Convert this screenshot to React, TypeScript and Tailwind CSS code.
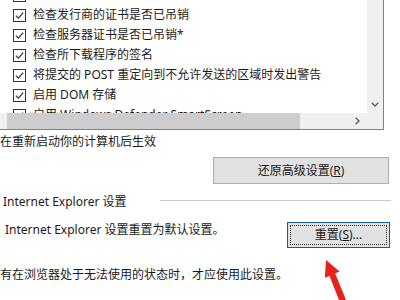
import React from "react";

const rows = [
  "检查证书地址不匹配*",
  "检查发行商的证书是否已吊销",
  "检查服务器证书是否已吊销*",
  "检查所下载程序的签名",
  "将提交的 POST 重定向到不允许发送的区域时发出警告",
  "启用 DOM 存储",
  "启用 Windows Defender SmartScreen",
];

const CheckBox = () => (
  <svg width="13" height="13" viewBox="0 0 13 13" className="shrink-0">
    <rect x="0.5" y="0.5" width="12" height="12" fill="#fff" stroke="#333" />
    <path d="M2.8 6.6 L5.3 9.1 L10.2 3.6" fill="none" stroke="#333" strokeWidth="1.2" />
  </svg>
);

const Arrow = () => (
  <svg width="400" height="300" className="pointer-events-none absolute left-0 top-0">
    <polygon points="326,260 339.6,271.6 335.2,273.5 346,300 339,300 329.5,275.9 324.8,277.8" fill="#e5231b" />
  </svg>
);

export default function App() {
  return (
    <div
      className="relative h-[300px] w-[400px] overflow-hidden bg-white text-[12px] leading-[16px] text-[#1a1a1a]"
      style={{ fontFamily: '"Noto Sans", "Noto Sans CJK SC", sans-serif' }}
    >
      {/* advanced settings list box */}
      <div className="flex h-[130px] w-[384px] flex-col border-b border-r border-[#828282]">
        <div className="flex h-[113px]">
          <div className="flex-1 overflow-hidden">
            <div className="-mt-[15px] flex flex-col">
              {rows.map((r) => (
                <div key={r} className="flex h-[20px] items-center gap-[7px] pl-[13px] whitespace-nowrap">
                  <CheckBox />
                  <span>{r}</span>
                </div>
              ))}
            </div>
          </div>
          <div className="flex w-[16px] flex-col items-center justify-end bg-[#f0f0f0] pb-[6px]">
            <svg width="8" height="5" viewBox="0 0 8 5">
              <path d="M0.7 0.7 L4 4 L7.3 0.7" fill="none" stroke="#606060" strokeWidth="1.4" />
            </svg>
          </div>
        </div>
        <div className="flex h-[16px]">
          <div className="w-[7px] bg-[#f0f0f0]" />
          <div className="w-[293px] bg-[#cdcdcd]" />
          <div className="flex flex-1 items-center justify-end bg-[#f0f0f0] pr-[23px]">
            <svg width="5" height="8" viewBox="0 0 5 8">
              <path d="M0.7 0.7 L4 4 L0.7 7.3" fill="none" stroke="#606060" strokeWidth="1.4" />
            </svg>
          </div>
        </div>
      </div>

      <div className="mt-[4px] whitespace-nowrap">在重新启动你的计算机后生效</div>

      <div className="mt-[7px] flex">
        <button className="ml-[213px] flex h-[27px] w-[176px] items-center justify-center border border-[#adadad] bg-[#e1e1e1]">
          还原高级设置(<span className="underline">R</span>)
        </button>
      </div>

      <div className="mt-[10px] flex h-[16px] items-start">
        <span className="ml-[3px] whitespace-nowrap">Internet Explorer 设置</span>
        <div className="ml-auto mr-[9px] mt-[6px] h-px w-[231px] bg-[#c8c8c8]" />
      </div>

      <div className="mt-[12px] flex items-start">
        <span className="ml-[5px] whitespace-nowrap">Internet Explorer 设置重置为默认设置。</span>
        <button className="ml-auto mr-[10px] flex h-[26px] w-[103px] border border-[#1c5e94] bg-[#e1e1e1] p-[2px]">
          <span className="flex flex-1 items-center justify-center border border-dotted border-[#333]">
            重置(<span className="underline">S</span>)...
          </span>
        </button>
      </div>

      <div className="mt-[19px] whitespace-nowrap">有在浏览器处于无法使用的状态时，才应使用此设置。</div>

      <Arrow />
    </div>
  );
}
